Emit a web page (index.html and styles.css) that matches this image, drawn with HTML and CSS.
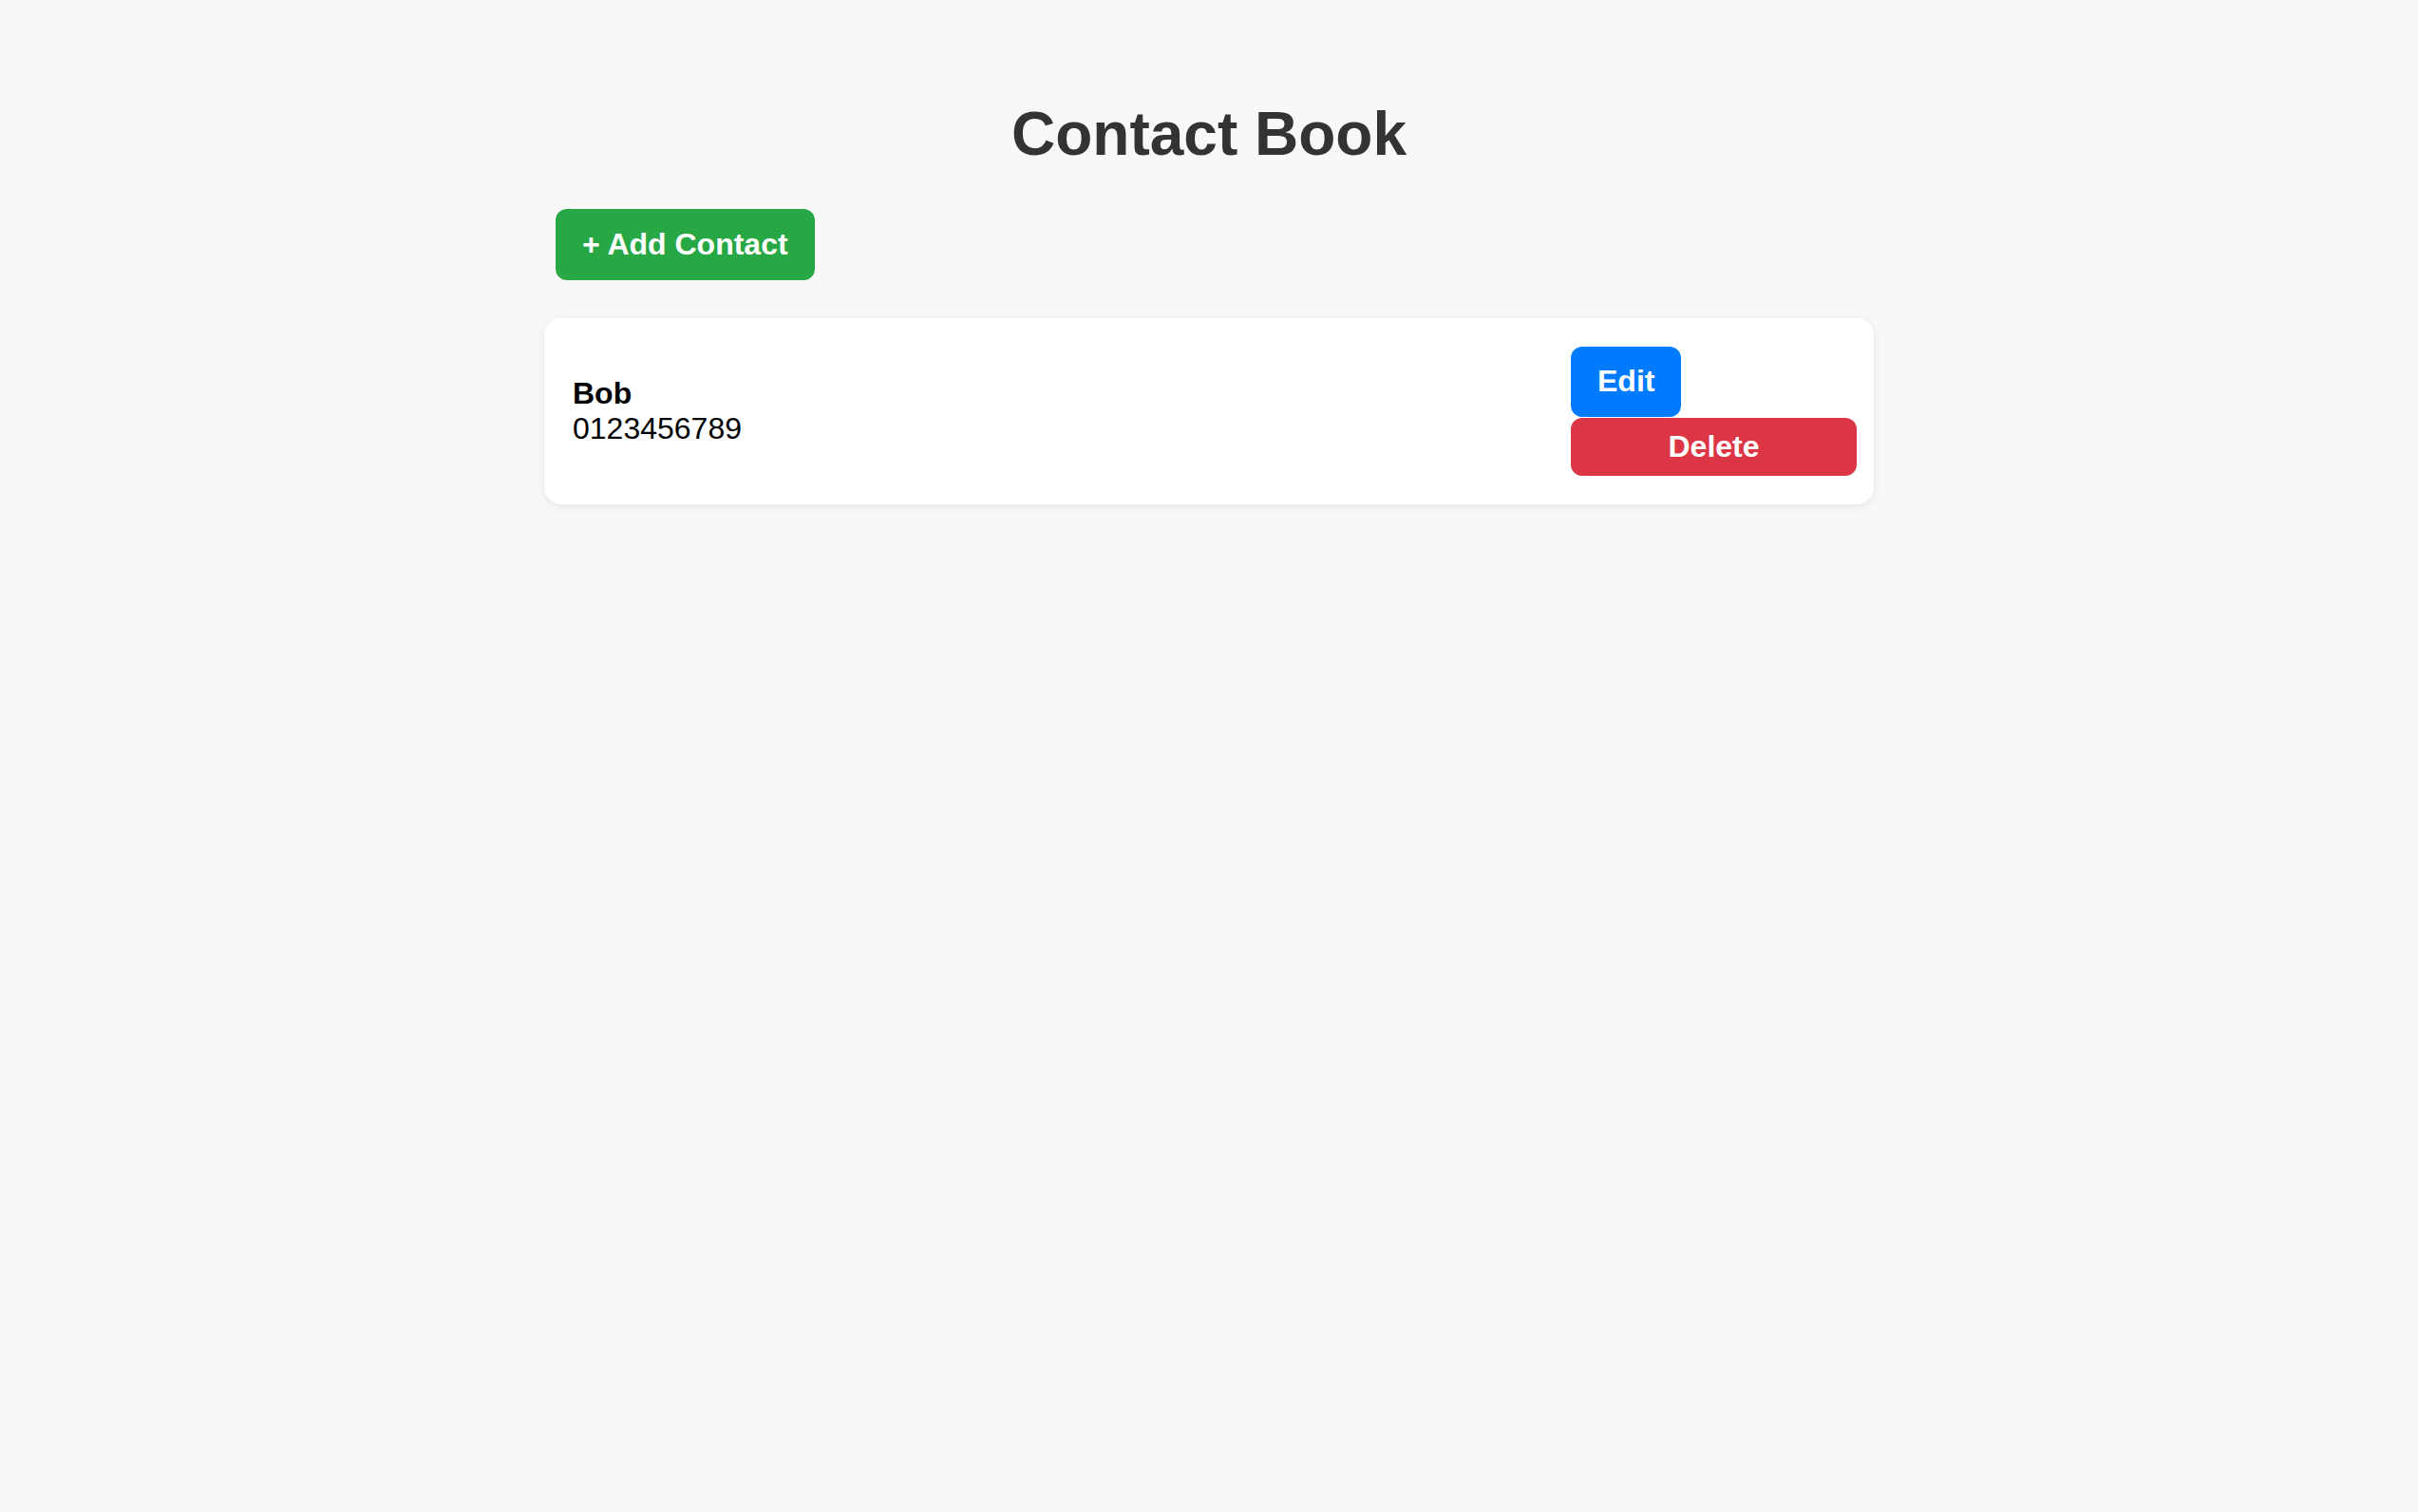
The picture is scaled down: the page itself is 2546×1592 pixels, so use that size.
FILE: index.html
```html
<!DOCTYPE html>
<html lang="en">
<head>
<meta charset="utf-8">
<title>Contact Book</title>
<link rel="stylesheet" href="styles.css">
</head>
<body>
  <main class="app">
    <h1 class="title">Contact Book</h1>
    <button class="btn btn-add">+ Add Contact</button>
    <ul class="contact-list">
      <li class="contact-card">
        <div class="contact-info">
          <strong class="contact-name">Bob</strong>
          <span class="contact-phone">0123456789</span>
        </div>
        <div class="contact-actions">
          <button class="btn btn-edit">Edit</button>
          <button class="btn btn-delete">Delete</button>
        </div>
      </li>
    </ul>
  </main>
</body>
</html>
```

FILE: styles.css
```css
html, body {
  margin: 0;
  padding: 0;
}

body {
  background: #f8f8f8;
  font-family: "Liberation Sans", Arial, sans-serif;
  color: #000;
  min-height: 100vh;
}

.app {
  width: 1400px;
  margin: 0 auto;
  padding-top: 60px;
  display: flex;
  flex-direction: column;
  align-items: stretch;
}

.title {
  margin: 45px 0 41px;
  font-size: 64px;
  font-weight: bold;
  line-height: 73.6px;
  color: #333;
  text-align: center;
}

.btn {
  font-family: "Liberation Sans", Arial, sans-serif;
  font-size: 32px;
  font-weight: bold;
  line-height: 37px;
  color: #fff;
  border: none;
  border-radius: 12px;
  cursor: pointer;
  padding: 18.5px 28px;
}

.btn-add {
  align-self: flex-start;
  margin-left: 12px;
  padding: 19px 28px;
  background: #28a745;
}

.contact-list {
  list-style: none;
  margin: 40px 0 0;
  padding: 0;
}

.contact-card {
  background: #fff;
  border-radius: 18px;
  box-shadow: 0 2px 10px rgba(0, 0, 0, 0.08);
  padding: 30px 18px 30px 30px;
  display: flex;
  justify-content: space-between;
  align-items: center;
}

.contact-info {
  display: flex;
  flex-direction: column;
  font-size: 32px;
  line-height: 36.8px;
}

.contact-name {
  font-weight: bold;
}

.contact-actions {
  width: 301px;
  display: flex;
  flex-direction: column;
  align-items: stretch;
}

.btn-edit {
  align-self: flex-start;
  padding: 18.5px 28px;
  background: #007bff;
}

.btn-delete {
  margin-top: 1px;
  padding: 12px 28px;
  background: #dc3545;
}
```
